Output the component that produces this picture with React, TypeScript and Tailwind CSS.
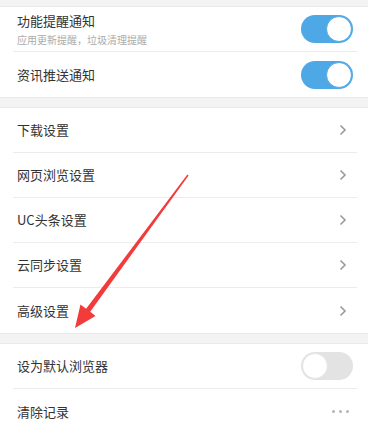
import React from "react";

const font = { fontFamily: '"Noto Sans CJK SC", "Noto Sans", sans-serif' };

function Toggle({ on }: { on: boolean }) {
  return (
    <div
      className={`w-[52px] h-[28px] rounded-full flex items-center p-[1px] ${
        on ? "bg-[#4fa8e6] justify-end" : "bg-[#e3e3e3] justify-start"
      }`}
    >
      <div
        className={`w-[26px] h-[26px] rounded-full bg-white border ${
          on ? "border-[#4fa8e6]" : "border-[#e3e3e3]"
        }`}
      />
    </div>
  );
}

function Chevron() {
  return (
    <svg width="8" height="12" viewBox="0 0 8 12" className="mr-[6px]">
      <polyline points="1.5,1.5 6,6 1.5,10.5" fill="none" stroke="#9a9a9a" strokeWidth="1.6" />
    </svg>
  );
}

function Row({
  title,
  sub,
  right,
  last,
}: {
  title: string;
  sub?: string;
  right: React.ReactNode;
  last?: boolean;
}) {
  return (
    <div
      className={`h-[45px] flex items-center justify-between pl-[4px] pr-[4px] ${
        last ? "" : "border-b border-[#ececec]"
      }`}
    >
      <div className="flex flex-col">
        <span className="text-[13px] leading-[16px] text-[#333333]">{title}</span>
        {sub && (
          <span className="text-[10px] leading-[12px] mt-[5px] text-[#ababab]">{sub}</span>
        )}
      </div>
      {right}
    </div>
  );
}

function Card({ children }: { children: React.ReactNode }) {
  return (
    <div className="bg-white border-y border-[#e9e9e9] pl-[13px] pr-[11px]">{children}</div>
  );
}

export default function App() {
  return (
    <div className="relative w-[368px] h-[433px] overflow-hidden bg-[#f3f3f3]" style={font}>
      <div className="flex flex-col pt-[6px] gap-[9px]">
        <Card>
          <Row title="功能提醒通知" sub="应用更新提醒，垃圾清理提醒" right={<Toggle on />} />
          <Row title="资讯推送通知" right={<Toggle on />} last />
        </Card>
        <Card>
          <Row title="下载设置" right={<Chevron />} />
          <Row title="网页浏览设置" right={<Chevron />} />
          <Row title="UC头条设置" right={<Chevron />} />
          <Row title="云同步设置" right={<Chevron />} />
          <Row title="高级设置" right={<Chevron />} last />
        </Card>
        <Card>
          <Row title="设为默认浏览器" right={<Toggle on={false} />} />
          <Row
            title="清除记录"
            right={
              <div className="flex gap-[4px] mr-[4px]">
                <span className="w-[3px] h-[3px] rounded-full bg-[#b5b5b5]" />
                <span className="w-[3px] h-[3px] rounded-full bg-[#b5b5b5]" />
                <span className="w-[3px] h-[3px] rounded-full bg-[#b5b5b5]" />
              </div>
            }
            last
          />
        </Card>
      </div>
      <svg
        className="absolute left-0 top-0 pointer-events-none"
        width="368"
        height="433"
        viewBox="0 0 368 433"
      >
        <polygon
          points="75,328 95.5,316 90.2,311.8 188.6,175.4 187.4,174.6 86.1,308.8 80.5,304.5"
          fill="#f23b3b"
        />
      </svg>
    </div>
  );
}
